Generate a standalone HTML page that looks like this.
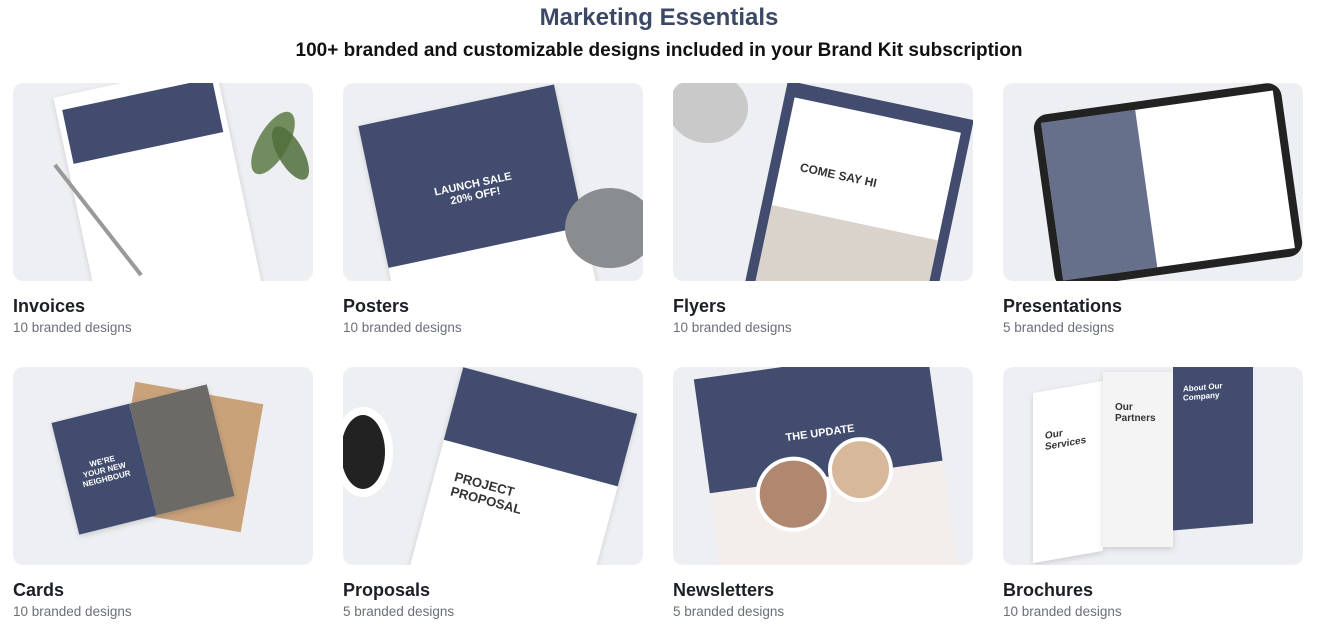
<!DOCTYPE html>
<html><head><meta charset="utf-8"><style>
*{margin:0;padding:0;box-sizing:border-box}
body{width:1318px;height:643px;background:#fff;font-family:"Liberation Sans",sans-serif;position:relative;overflow:hidden}
h1{position:absolute;top:4px;left:0;width:1318px;text-align:center;font-size:24px;color:#3b4866;font-weight:bold}
h2{position:absolute;top:40px;left:0;width:1318px;text-align:center;font-size:19px;color:#111;font-weight:bold}
.c{position:absolute;width:300px;height:198px;background:#eeeff2;border-radius:10px;overflow:hidden}
.t{position:absolute;font-size:18px;font-weight:bold;color:#1d1f26}
.s{position:absolute;font-size:13.5px;color:#6b6f78}
.p{position:absolute;background:#fff;box-shadow:0 2px 6px rgba(0,0,0,.15)}
.n{position:absolute;background:#414c6e}
.w{color:#fff;font-size:11px;font-weight:bold;text-align:center;position:absolute}
</style></head><body>
<h1>Marketing Essentials</h1>
<h2>100+ branded and customizable designs included in your Brand Kit subscription</h2>

<div class="c" style="left:13px;top:83px">
 <div class="p" style="left:62px;top:-5px;width:165px;height:225px;transform:rotate(-12deg)">
  <div class="n" style="left:6px;top:14px;width:153px;height:55px"></div></div>
 <div style="position:absolute;left:15px;top:135px;width:140px;height:4px;background:#999;transform:rotate(52deg)"></div>
 <div style="position:absolute;left:245px;top:25px;width:30px;height:70px;background:#5c7a45;border-radius:50%;opacity:.85;transform:rotate(30deg)"></div>
 <div style="position:absolute;left:265px;top:40px;width:25px;height:60px;background:#4f6e3b;border-radius:50%;opacity:.85;transform:rotate(-30deg)"></div>
</div>
<div class="t" style="left:13px;top:296px">Invoices</div><div class="s" style="left:13px;top:320px">10 branded designs</div>

<div class="c" style="left:343px;top:83px">
 <div class="p" style="left:35px;top:20px;width:200px;height:210px;transform:rotate(-12deg)">
  <div class="n" style="left:0;top:0;width:200px;height:145px"><div class="w" style="left:0;top:75px;width:200px">LAUNCH SALE<br>20% OFF!</div></div></div>
 <div style="position:absolute;left:222px;top:105px;width:90px;height:80px;background:#8a8d90;border-radius:50%"></div>
</div>
<div class="t" style="left:343px;top:296px">Posters</div><div class="s" style="left:343px;top:320px">10 branded designs</div>

<div class="c" style="left:673px;top:83px">
 <div class="n" style="left:90px;top:15px;width:190px;height:220px;transform:rotate(12deg)">
  <div style="position:absolute;left:10px;top:15px;width:170px;height:210px;background:#fff"><div style="position:absolute;left:20px;top:60px;font-size:12px;font-weight:bold;color:#333">COME SAY HI</div><div style="position:absolute;left:0;top:110px;width:170px;height:100px;background:#d9d3cc"></div></div></div>
 <div style="position:absolute;left:-5px;top:-10px;width:80px;height:70px;background:#c9c9c9;border-radius:50%"></div>
</div>
<div class="t" style="left:673px;top:296px">Flyers</div><div class="s" style="left:673px;top:320px">10 branded designs</div>

<div class="c" style="left:1003px;top:83px">
 <div style="position:absolute;left:40px;top:15px;width:250px;height:175px;background:#222;border-radius:14px;transform:rotate(-8deg)">
  <div style="position:absolute;left:8px;top:8px;width:234px;height:159px;background:#fff"><div class="n" style="left:0;top:0;width:95px;height:159px;opacity:.8"></div></div></div>
</div>
<div class="t" style="left:1003px;top:296px">Presentations</div><div class="s" style="left:1003px;top:320px">5 branded designs</div>

<div class="c" style="left:13px;top:367px">
 <div style="position:absolute;left:110px;top:25px;width:130px;height:130px;background:#c9a27a;transform:rotate(10deg)"></div>
 <div class="p" style="left:50px;top:35px;width:160px;height:115px;transform:rotate(-14deg)">
  <div class="n" style="left:0;top:0;width:80px;height:115px"><div class="w" style="left:0;top:45px;width:80px;font-size:8px">WE'RE<br>YOUR NEW<br>NEIGHBOUR</div></div>
  <div style="position:absolute;left:80px;top:0;width:80px;height:115px;background:#6b6a66"></div></div>
</div>
<div class="t" style="left:13px;top:580px">Cards</div><div class="s" style="left:13px;top:604px">10 branded designs</div>

<div class="c" style="left:343px;top:367px">
 <div class="p" style="left:90px;top:20px;width:180px;height:210px;transform:rotate(15deg)">
  <div class="n" style="left:0;top:0;width:180px;height:75px"></div>
  <div style="position:absolute;left:20px;top:100px;font-size:13px;font-weight:bold;color:#333">PROJECT<br>PROPOSAL</div></div>
 <div style="position:absolute;left:-10px;top:40px;width:60px;height:90px;background:#222;border:8px solid #fff;border-radius:50%"></div>
</div>
<div class="t" style="left:343px;top:580px">Proposals</div><div class="s" style="left:343px;top:604px">5 branded designs</div>

<div class="c" style="left:673px;top:367px">
 <div style="position:absolute;left:35px;top:-5px;width:235px;height:220px;background:#f3edeb;transform:rotate(-8deg)">
  <div class="n" style="left:0;top:0;width:235px;height:115px"><div class="w" style="left:0;top:65px;width:235px">THE UPDATE</div></div>
  <div style="position:absolute;left:45px;top:90px;width:75px;height:75px;border-radius:50%;background:#b08870;border:4px solid #fff"></div>
  <div style="position:absolute;left:120px;top:80px;width:65px;height:65px;border-radius:50%;background:#d8b89a;border:4px solid #fff"></div></div>
</div>
<div class="t" style="left:673px;top:580px">Newsletters</div><div class="s" style="left:673px;top:604px">5 branded designs</div>

<div class="c" style="left:1003px;top:367px">
 <div class="p" style="left:30px;top:20px;width:70px;height:170px;transform:skewY(-10deg)"><div style="position:absolute;left:12px;top:40px;font-size:10px;font-weight:bold;color:#333">Our<br>Services</div></div>
 <div class="p" style="left:100px;top:5px;width:70px;height:175px;background:#f4f4f4"><div style="position:absolute;left:12px;top:30px;font-size:10px;font-weight:bold;color:#333">Our<br>Partners</div></div>
 <div class="n" style="left:170px;top:-5px;width:80px;height:165px;transform:skewY(-5deg)"><div class="w" style="left:10px;top:20px;font-size:8px;text-align:left">About Our<br>Company</div></div>
</div>
<div class="t" style="left:1003px;top:580px">Brochures</div><div class="s" style="left:1003px;top:604px">10 branded designs</div>
</body></html>
